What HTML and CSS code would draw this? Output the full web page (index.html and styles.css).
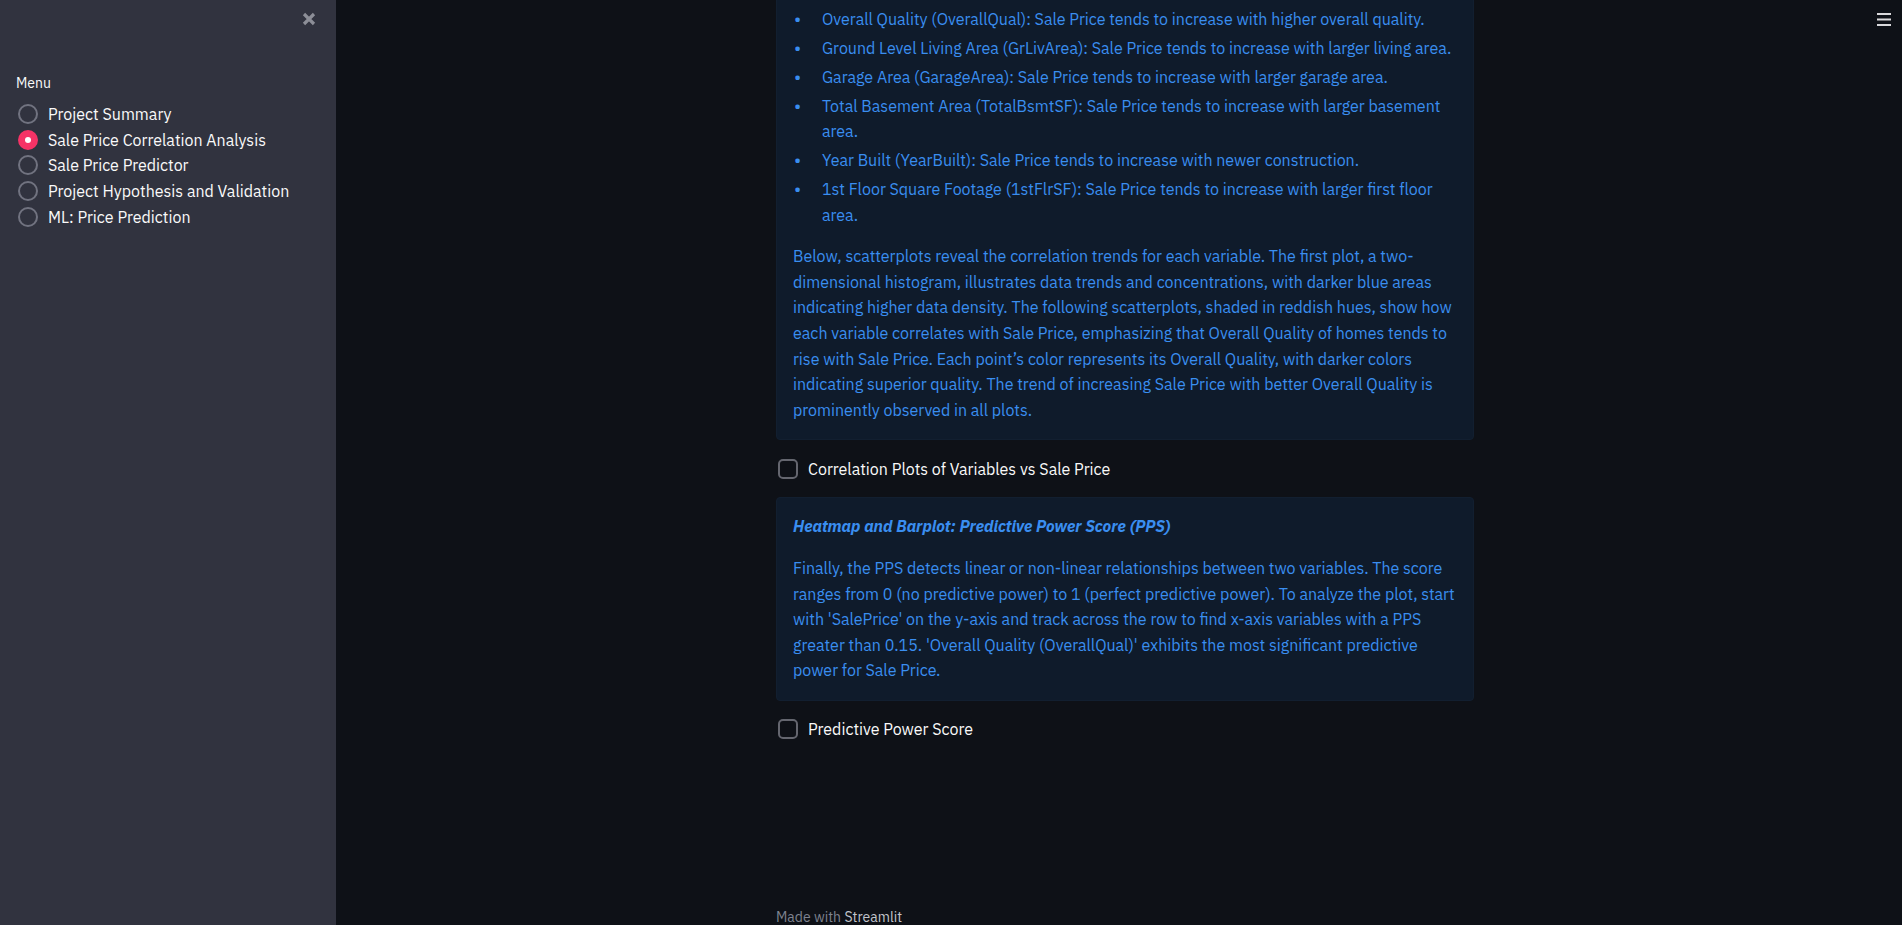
FILE: index.html
```html
<!DOCTYPE html>
<html lang="en">
<head>
<meta charset="utf-8">
<title>Sale Price Correlation Analysis</title>
<link rel="stylesheet" href="styles.css">
</head>
<body>
<div class="app">
  <aside class="sidebar">
    <div class="sidebar-top">
      <button class="close-btn" aria-label="Close sidebar">
        <svg width="14" height="14" viewBox="0 0 14 14"><path d="M2 2 L12 12 M12 2 L2 12" stroke="#8c8e97" stroke-width="3.2" stroke-linecap="butt" fill="none"/></svg>
      </button>
    </div>
    <div class="menu-label">Menu</div>
    <div class="radio-group">
      <label class="radio"><span class="radio-circle"></span><span class="radio-text">Project Summary</span></label>
      <label class="radio radio-active"><span class="radio-circle"></span><span class="radio-text">Sale Price Correlation Analysis</span></label>
      <label class="radio"><span class="radio-circle"></span><span class="radio-text">Sale Price Predictor</span></label>
      <label class="radio"><span class="radio-circle"></span><span class="radio-text">Project Hypothesis and Validation</span></label>
      <label class="radio"><span class="radio-circle"></span><span class="radio-text">ML: Price Prediction</span></label>
    </div>
  </aside>
  <main class="main">
    <div class="block">
      <div class="info">
        <ul class="info-list">
          <li>Overall Quality (OverallQual): Sale Price tends to increase with higher overall quality.</li>
          <li>Ground Level Living Area (GrLivArea): Sale Price tends to increase with larger living area.</li>
          <li>Garage Area (GarageArea): Sale Price tends to increase with larger garage area.</li>
          <li>Total Basement Area (TotalBsmtSF): Sale Price tends to increase with larger basement area.</li>
          <li>Year Built (YearBuilt): Sale Price tends to increase with newer construction.</li>
          <li>1st Floor Square Footage (1stFlrSF): Sale Price tends to increase with larger first floor area.</li>
        </ul>
        <p>Below, scatterplots reveal the correlation trends for each variable. The first plot, a two-dimensional histogram, illustrates data trends and concentrations, with darker blue areas indicating higher data density. The following scatterplots, shaded in reddish hues, show how each variable correlates with Sale Price, emphasizing that Overall Quality of homes tends to rise with Sale Price. Each point’s color represents its Overall Quality, with darker colors indicating superior quality. The trend of increasing Sale Price with better Overall Quality is prominently observed in all plots.</p>
      </div>
      <label class="checkbox"><span class="checkbox-box"></span><span class="checkbox-text">Correlation Plots of Variables vs Sale Price</span></label>
      <div class="info">
        <p class="info-heading"><strong><em>Heatmap and Barplot: Predictive Power Score (PPS)</em></strong></p>
        <p>Finally, the PPS detects linear or non-linear relationships between two variables. The score ranges from 0 (no predictive power) to 1 (perfect predictive power). To analyze the plot, start with 'SalePrice' on the y-axis and track across the row to find x-axis variables with a PPS greater than 0.15. 'Overall Quality (OverallQual)' exhibits the most significant predictive power for Sale Price.</p>
      </div>
      <label class="checkbox"><span class="checkbox-box"></span><span class="checkbox-text">Predictive Power Score</span></label>
    </div>
    <footer class="footer">Made with <span class="footer-brand">Streamlit</span></footer>
  </main>
  <button class="menu-btn" aria-label="Main menu">
    <svg width="14" height="14" viewBox="0 0 14 14"><rect x="0" y="1" width="14" height="2" fill="#d9d9dc"/><rect x="0" y="6.5" width="14" height="2" fill="#d9d9dc"/><rect x="0" y="12" width="14" height="2" fill="#d9d9dc"/></svg>
  </button>
</div>
</body>
</html>
```
FILE: styles.css
```css
html, body {
  margin: 0;
  padding: 0;
  height: 100%;
  overflow: hidden;
  background: #0e1117;
  font-family: "IBM Plex Sans", Roboto, "Liberation Sans", sans-serif;
  color: #fafafa;
}

.app {
  display: flex;
  height: 100vh;
  position: relative;
}

/* Sidebar */
.sidebar {
  width: 336px;
  flex-shrink: 0;
  background: #31333f;
  padding: 0 16px;
  box-sizing: border-box;
}

.sidebar-top {
  height: 38px;
  display: flex;
  justify-content: flex-end;
  align-items: center;
}

.close-btn {
  width: 14px;
  height: 14px;
  padding: 0;
  margin-right: 4px;
  border: 0;
  background: none;
  display: flex;
}

.menu-label {
  margin-top: 35px;
  font-size: 14px;
  line-height: 20px;
  color: #fafafa;
}

.radio-group {
  margin-top: 8px;
  display: flex;
  flex-direction: column;
}

.radio {
  display: flex;
  align-items: center;
  height: 25.7px;
  font-size: 16px;
  color: #fafafa;
}

.radio-circle {
  width: 20px;
  height: 20px;
  box-sizing: border-box;
  border: 2px solid #717380;
  border-radius: 50%;
  margin-left: 2px;
  margin-right: 10px;
  display: flex;
  align-items: center;
  justify-content: center;
}

.radio-active .radio-circle {
  background: #f63366;
  border-color: #f63366;
}

.radio-active .radio-circle::after {
  content: "";
  width: 6px;
  height: 6px;
  border-radius: 50%;
  background: #ffffff;
}

/* Main */
.main {
  flex: 1;
  display: flex;
  flex-direction: column;
  align-items: center;
  padding-left: 12px;
}

.block {
  width: 698px;
  flex: 1;
  margin-top: -10px;
  display: flex;
  flex-direction: column;
  gap: 16px;
}

.info {
  background: #0f1b2b;
  border: 1px solid #121f30;
  border-radius: 4px;
  padding: 16px;
  color: #3a8ef0;
  font-size: 16px;
  line-height: 1.6;
}

.info p {
  margin: 0;
}

.info .info-heading {
  margin-bottom: 16px;
}

.info-list {
  list-style: none;
  margin: 0 0 16px;
  padding: 0;
}

.info-list li {
  display: grid;
  grid-template-columns: 9px 1fr;
  column-gap: 20px;
}

.info-list li + li {
  margin-top: 3.3px;
}

.info-list li::before {
  content: "•";
  text-align: center;
  font-size: 18px;
  line-height: 25.6px;
}

.checkbox {
  display: flex;
  align-items: center;
  height: 25px;
  font-size: 16px;
  color: #fafafa;
}

.checkbox-box {
  width: 20px;
  height: 20px;
  box-sizing: border-box;
  border: 2px solid #64666f;
  border-radius: 5px;
  margin-left: 2px;
  margin-right: 10px;
}

.footer {
  width: 698px;
  font-size: 14px;
  line-height: 16px;
  color: #7f8390;
}

.footer-brand {
  color: #c2c5cc;
}

.menu-btn {
  position: absolute;
  top: 12px;
  right: 11px;
  width: 14px;
  height: 14px;
  padding: 0;
  border: 0;
  background: none;
  display: flex;
}
```
